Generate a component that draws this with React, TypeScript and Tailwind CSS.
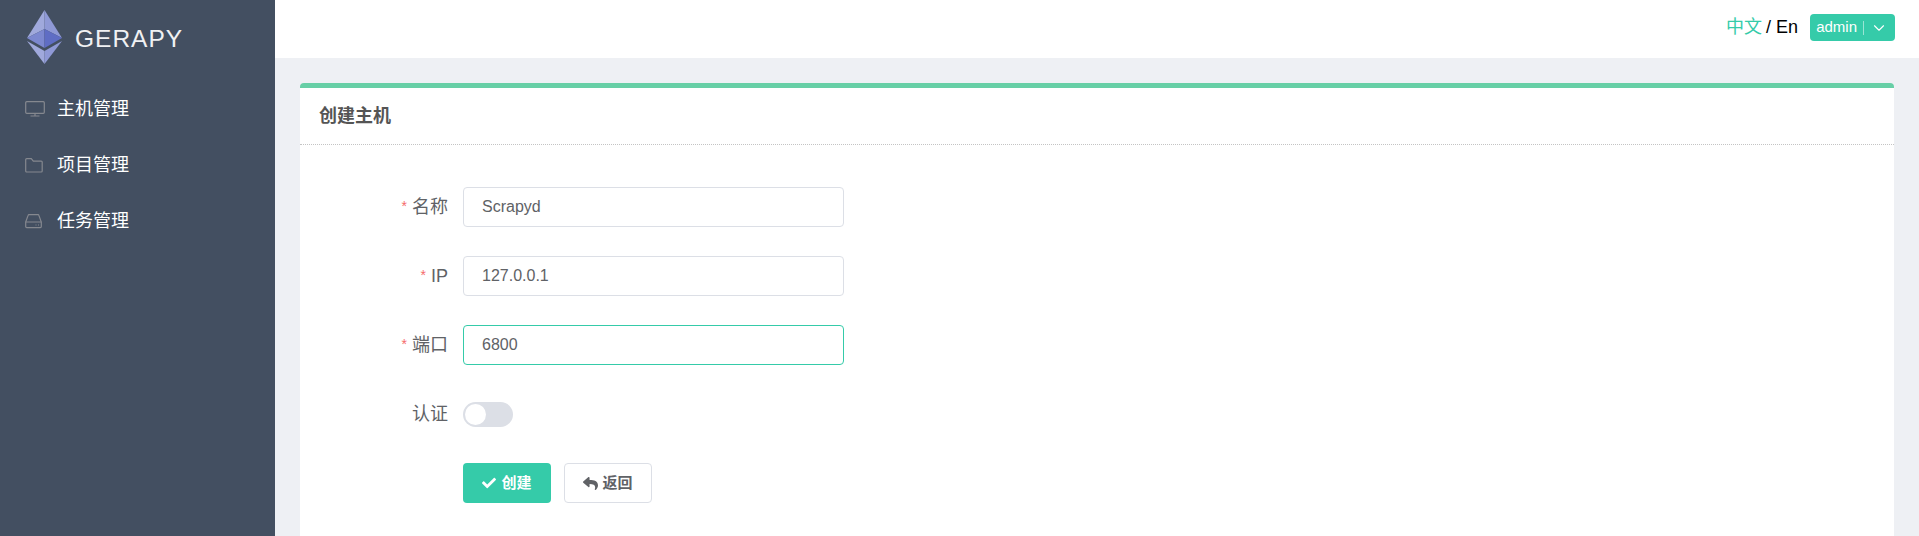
import { ChevronDown } from "lucide-react";
import { FaCheck, FaReply } from "react-icons/fa";

const font = "font-['Liberation_Sans','Noto_Sans_CJK_SC',sans-serif]";

function Logo() {
  return (
    <svg width="36" height="54" viewBox="0 0 36 54" className="shrink-0">
      <polygon points="17.5,0 0,28 17.5,19" fill="#a0a9dc" />
      <polygon points="17.5,0 35,28 17.5,19" fill="#8f99d6" />
      <polygon points="17.5,19 0,28 17.5,38" fill="#7c88d0" />
      <polygon points="17.5,19 35,28 17.5,38" fill="#5f6dc4" />
      <polygon points="0,31 17.5,41 17.5,54" fill="#a0a9dc" />
      <polygon points="35,31 17.5,41 17.5,54" fill="#8f99d6" />
    </svg>
  );
}

function MonitorIcon() {
  return (
    <svg width="20" height="16" viewBox="0 0 20 16" fill="none" stroke="#85888f" strokeWidth="1.2">
      <rect x="0.7" y="0.7" width="18.6" height="11.6" rx="1" />
      <path d="M10 12.5v2M5.5 15h9" />
    </svg>
  );
}

function FolderIcon() {
  return (
    <svg width="18" height="15" viewBox="0 0 18 15" fill="none" stroke="#85888f" strokeWidth="1.2">
      <path d="M0.7 13V1.7a1 1 0 0 1 1-1h4.6l2 2.4h7.9a1 1 0 0 1 1 1V13a1 1 0 0 1-1 1H1.7a1 1 0 0 1-1-1z" />
    </svg>
  );
}

function InboxIcon() {
  return (
    <svg width="17" height="15" viewBox="0 0 17 15" fill="none" stroke="#85888f" strokeWidth="1.2">
      <path d="M0.7 8l2.4-6.6a1 1 0 0 1 .9-.7h9a1 1 0 0 1 .9.7L16.3 8v4.6a1 1 0 0 1-1 1H1.7a1 1 0 0 1-1-1z" />
      <path d="M0.7 8h15.6M10.5 11h1M13 11h1" />
    </svg>
  );
}

const menu = [
  { label: "主机管理", icon: <MonitorIcon /> },
  { label: "项目管理", icon: <FolderIcon /> },
  { label: "任务管理", icon: <InboxIcon /> },
];

function Field({ label, value, required, focused }: { label: string; value: string; required?: boolean; focused?: boolean }) {
  return (
    <div className="flex items-center h-[40px] mb-[29px]">
      <label className="w-[163px] pr-[15px] text-right text-[18px] text-[#606266]">
        {required && <span className="text-[#f56c6c] text-[14px] mr-[5px] align-[2px]">*</span>}
        {label}
      </label>
      <input
        readOnly
        value={value}
        className={`w-[381px] h-[40px] rounded-[4px] border px-[18px] text-[16px] text-[#606266] bg-white outline-none ${focused ? "border-[#35cba9]" : "border-[#dcdfe6]"}`}
      />
    </div>
  );
}

export default function App() {
  return (
    <div className={`flex h-[536px] overflow-hidden bg-[#eef0f4] ${font}`}>
      <aside className="w-[275px] shrink-0 bg-[#434f61]">
        <div className="flex items-center h-[78px] pl-[27px] pb-[4px]">
          <Logo />
          <span className="ml-[12px] mt-[4px] text-[24.5px] tracking-[1px] text-[#f0f1f3]">GERAPY</span>
        </div>
        <nav className="pt-[3px]">
          {menu.map((item) => (
            <div key={item.label} className="flex items-center h-[56px] text-[18px] text-white">
              <span className="flex items-center w-[57px] pl-[25px]">{item.icon}</span>
              {item.label}
            </div>
          ))}
        </nav>
      </aside>

      <div className="flex-1 min-w-0">
        <header className="flex items-center justify-end h-[58px] bg-white pr-[24px] pb-[3px]">
          <span className="text-[18px] text-[#35cba9]">中文</span>
          <span className="text-[18px] text-black ml-[4px]">/ En</span>
          <button className="flex items-center h-[27px] ml-[12px] pl-[6px] pr-[7px] rounded-[4px] bg-[#35cba9] text-white text-[15px]">
            admin
            <span className="w-px h-[14px] bg-white/50 ml-[6px] mr-[6px]" />
            <ChevronDown size={18} strokeWidth={1.5} />
          </button>
        </header>

        <main className="mx-[25px] mt-[25px] h-[453px] bg-white rounded-t-[4px] border-t-[5px] border-[#67cfa6]">
          <h2 className="flex items-center h-[57px] px-[19px] text-[18px] font-bold text-[#555] border-b border-dotted border-[#c4c4c4]">
            创建主机
          </h2>
          <form className="pt-[42px]">
            <Field label="名称" value="Scrapyd" required />
            <Field label="IP" value="127.0.0.1" required />
            <Field label="端口" value="6800" required focused />
            <div className="flex items-center h-[40px] mb-[29px]">
              <label className="w-[163px] pr-[15px] text-right text-[18px] text-[#606266]">认证</label>
              <span className="flex items-center w-[50px] h-[25px] rounded-full bg-[#dcdfe6] pl-[2px]">
                <span className="w-[21px] h-[21px] rounded-full bg-white" />
              </span>
            </div>
            <div className="flex gap-[13px] pl-[163px]">
              <button type="button" className="flex items-center justify-center gap-[5px] w-[88px] h-[40px] rounded-[4px] bg-[#35cba9] text-white text-[15px] font-bold">
                <FaCheck size={14} />
                创建
              </button>
              <button type="button" className="flex items-center justify-center gap-[4px] w-[88px] h-[40px] rounded-[4px] bg-white border border-[#dcdfe6] text-[#606266] text-[15px] font-bold">
                <FaReply size={15} />
                返回
              </button>
            </div>
          </form>
        </main>
      </div>
    </div>
  );
}
